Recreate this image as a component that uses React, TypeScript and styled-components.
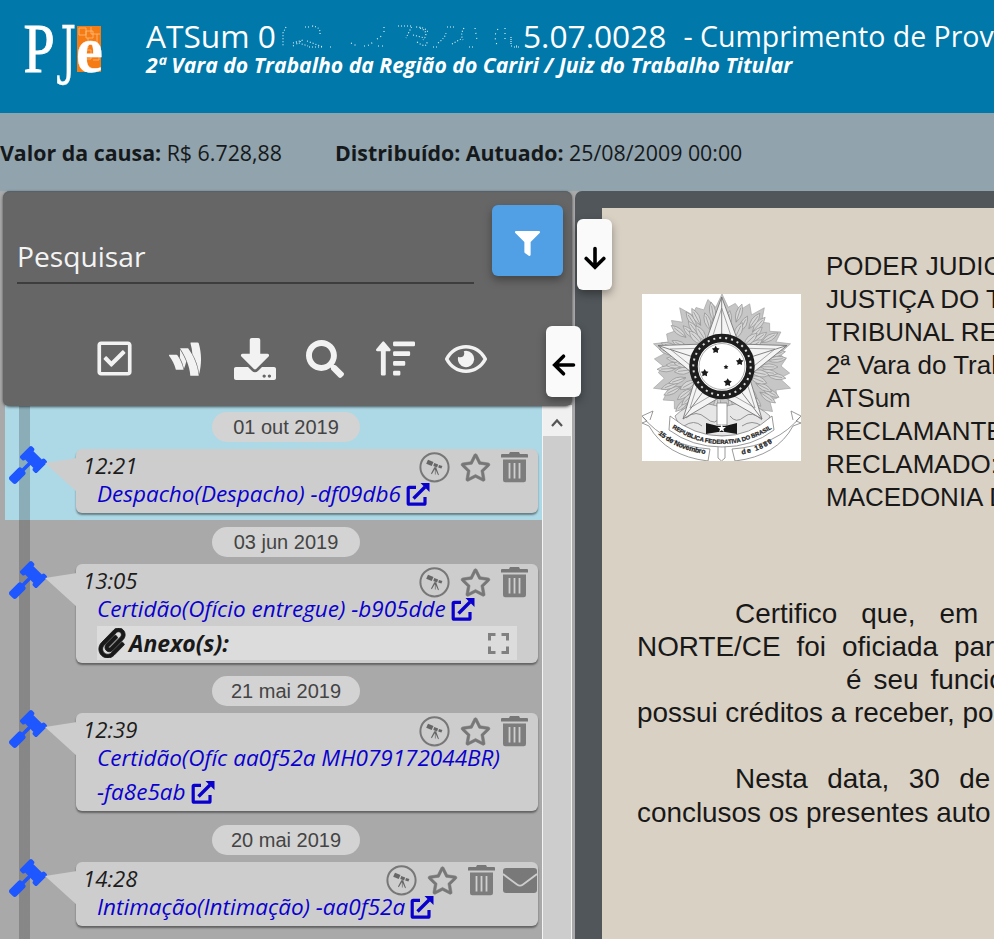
import React from "react";
import styled, { createGlobalStyle } from "styled-components";
import {
  FaDownload,
  FaFilter,
  FaGavel,
  FaGoogleWallet,
  FaPaperclip,
  FaRegCheckSquare,
  FaRegEye,
  FaRegStar,
  FaSearch,
  FaSortAmountUp,
} from "react-icons/fa";

const GlobalStyle = createGlobalStyle`
  *, *::before, *::after { box-sizing: border-box; }
  html, body { margin: 0; padding: 0; }
  body { overflow: hidden; font-family: "Open Sans", "Noto Sans", sans-serif; }
  svg { display: block; flex: none; }
`;

/* ---------- page frame ---------- */

const Page = styled.div`
  display: flex;
  flex-direction: column;
  width: 994px;
  height: 939px;
  overflow: hidden;
  background: #a9a9a9;
`;

const Header = styled.header`
  display: flex;
  flex: none;
  height: 113px;
  padding-left: 20px;
  background: #0078aa;
  color: #fff;
`;

const Brand = styled.div`
  flex: none;
  width: 126px;
  padding-top: 20px;
`;

const Titles = styled.div`
  flex: none;
  padding-top: 18px;
  white-space: nowrap;
`;

const CaseTitle = styled.div`
  display: flex;
  height: 32px;
  line-height: 35px;
  font-size: 31.7px;
`;

const CaseClass = styled.span`
  margin-left: 17px;
  font-size: 28.5px;
  line-height: 37px;
`;

const Court = styled.div`
  font-size: 21.2px;
  line-height: 29px;
  font-weight: 700;
  font-style: italic;
`;

const InfoBar = styled.div`
  display: flex;
  flex: none;
  align-items: center;
  gap: 53px;
  height: 78px;
  background: #91a3ac;
  color: #15191b;
  font-size: 21.35px;
  white-space: nowrap;
`;

const Body = styled.main`
  display: flex;
  flex: 1;
  min-height: 0;
  background: #a9a9a9;
`;

/* ---------- left column ---------- */

const Sidebar = styled.section`
  position: relative;
  z-index: 1;
  display: flex;
  flex-direction: column;
  flex: none;
  width: 572px;
`;

const ToolPanel = styled.div`
  position: relative;
  z-index: 1;
  flex: none;
  height: 215px;
  margin-left: 3px;
  border-radius: 7px;
  background: #666;
  box-shadow: 0 1px 3px rgba(0, 0, 0, 0.6), inset 0 1px 1px #56616a;
`;

const SearchRow = styled.div`
  display: flex;
  gap: 18px;
  padding: 14px 9px 0 14px;
`;

const SearchField = styled.div`
  width: 457px;
  height: 79px;
  padding-top: 33px;
  border-bottom: 2px solid #3d3d3d;
  color: #f4f4f4;
  font-size: 28.2px;
  line-height: 37px;
`;

const FilterButton = styled.button`
  display: flex;
  align-items: center;
  justify-content: center;
  width: 71px;
  height: 71px;
  padding: 5px 0 0;
  border: 0;
  border-radius: 6px;
  background: #519fe4;
  color: #fff;
  box-shadow: 0 4px 8px rgba(0, 0, 0, 0.35);
`;

const Tools = styled.div`
  display: grid;
  grid-template-columns: repeat(6, 70.4px);
  margin: 43px 0 0 76px;
  height: 63px;
`;

const Tool = styled.div<{ $w: number; $h: number }>`
  display: flex;
  align-items: center;
  justify-content: center;
  color: #f2f2f2;
  svg {
    width: ${(p) => p.$w}px;
    height: ${(p) => p.$h}px;
  }
`;

const ListArea = styled.div`
  display: flex;
  flex: 1;
  min-height: 0;
  margin-top: -1px;
  padding-left: 5px;
`;

const Timeline = styled.div`
  width: 537px;
  overflow: hidden;
`;

const Entry = styled.article<{ $height: number; $active?: boolean }>`
  height: ${(p) => p.$height}px;
  padding-top: 7px;
  background: linear-gradient(rgba(0, 0, 0, 0.2), rgba(0, 0, 0, 0.2)) 14px 0 / 11px 100% no-repeat
    ${(p) => (p.$active ? "#add8e6" : "#a9a9a9")};
`;

const DatePill = styled.div`
  width: 148px;
  height: 30px;
  margin-left: 207px;
  border-radius: 15px;
  background: #d3d3d3;
  color: #444;
  font: 20px/30px "Liberation Sans", sans-serif;
  text-align: center;
`;

const EntryRow = styled.div`
  display: flex;
  align-items: flex-start;
  margin-top: 7px;
  padding-left: 4px;
`;

const Hammer = styled.div`
  width: 67px;
  margin-top: -3.5px;
  color: #1e56ff;
`;

const Card = styled.div<{ $height: number }>`
  position: relative;
  width: 462px;
  height: ${(p) => p.$height}px;
  padding-left: 7px;
  border-radius: 6px;
  background: #cdcdcd;
  box-shadow: 0 2px 2px rgba(0, 0, 0, 0.42);
  font-style: italic;
  font-size: 22.5px;

  &::before {
    content: "";
    position: absolute;
    left: -31px;
    top: 9px;
    width: 32px;
    height: 34px;
    background: #cdcdcd;
    clip-path: polygon(0 5px, 100% 0, 100% 100%);
  }
`;

const CardHead = styled.div`
  display: flex;
  align-items: flex-start;
  justify-content: space-between;
  height: 28px;
  color: #1c1c1c;
  line-height: 34px;
  font-size: 22.2px;
`;

const Actions = styled.div<{ $right: number }>`
  display: flex;
  align-items: flex-start;
  padding: 3px ${(p) => p.$right}px 0 0;
  color: #777;
`;

const StarSlot = styled.div`
  margin: 0 10px 0 10px;
  svg {
    stroke: currentColor;
    stroke-width: 10;
  }
`;

const MailSlot = styled.div`
  margin: 3px 0 0 8px;
`;

const DocLink = styled.a`
  display: block;
  margin-left: 14px;
  color: #0a00cd;
  line-height: 34px;
  white-space: nowrap;
  svg {
    display: inline-block;
    vertical-align: -5px;
    margin-left: 5px;
  }
`;

const Attachments = styled.div`
  display: flex;
  align-items: center;
  width: 420px;
  height: 34px;
  margin-left: 14px;
  padding-right: 8px;
  background: #dcdcdc;
  color: #191919;
  font-size: 23px;
  line-height: 36px;
  font-weight: 700;
`;

const ClipSlot = styled.span`
  width: 27px;
  svg {
    stroke: currentColor;
    stroke-width: 14;
  }
`;

const AttachLabel = styled.span`
  flex: 1;
  margin-left: 5px;
`;

const Scrollbar = styled.div`
  width: 30px;
  border: solid #f4f4f4;
  border-width: 0 1px;
  background: #cdcdcd;
`;

const ScrollUp = styled.div`
  display: flex;
  align-items: center;
  justify-content: center;
  height: 31px;
  padding-top: 5px;
  background: #f0f0f0;
`;

const Tab = styled.button<{ $x: number; $y: number }>`
  position: absolute;
  z-index: 2;
  left: ${(p) => p.$x}px;
  top: ${(p) => p.$y}px;
  display: flex;
  align-items: center;
  justify-content: center;
  width: 35px;
  height: 71px;
  padding: 6px 0 0;
  border: 0;
  border-radius: 6px;
  background: #fafafa;
  box-shadow: 0 4px 8px rgba(0, 0, 0, 0.35);
`;

/* ---------- document viewer ---------- */

const Viewer = styled.section`
  flex: 1;
  min-width: 0;
  margin-left: 3px;
  padding: 17px 0 0 27px;
  border-top-left-radius: 7px;
  background: #50565a;
  overflow: hidden;
`;

const Sheet = styled.div`
  height: 100%;
  padding-top: 42px;
  background: #dad1c5;
  color: #181818;
  font-family: "Liberation Sans", sans-serif;
  white-space: pre;
`;

const Letterhead = styled.div`
  display: flex;
  padding-left: 40px;
`;

const Crest = styled.div`
  width: 159px;
  height: 167px;
  margin-top: 44px;
  background: #fff;
`;

const Heading = styled.div`
  margin-left: 25px;
  font-size: 26px;
  line-height: 33px;
`;

const Copy = styled.div`
  margin-top: 82.5px;
  padding-left: 35px;
  font-size: 27.9px;
  line-height: 33.2px;
`;

const CopyLine = styled.div<{ $indent?: number; $space?: number }>`
  height: 33.2px;
  padding-left: ${(p) => p.$indent ?? 0}px;
  word-spacing: ${(p) => p.$space ?? 0}px;
`;

/* ---------- drawings ---------- */

const Logo = () => (
  <svg width="90" height="72" viewBox="20 20 90 72">
    <rect x="77" y="26" width="24" height="46" fill="#f57c14" />
    <g fill="none" stroke="#ffc48a" strokeWidth=".7">
      <path d="M79 28h7v7h-7zM86 31h7v7h-7zM83 50h8v9h-8zM91 27v7h9M93 54h6v6h-6M88 38v10M97 34v8" />
    </g>
    <g fill="#fff" stroke="#fff">
      <text transform="translate(23.500 72) scale(.8 1)" fontFamily="Liberation Serif, serif" fontSize="70" strokeWidth="1" textLength="39" lengthAdjust="spacingAndGlyphs">P</text>
      <text transform="translate(60.500 72) scale(.62 1)" fontFamily="DejaVu Serif, serif" fontSize="63" strokeWidth=".3">J</text>
      <text transform="translate(76 71.500) scale(.92 1)" fontFamily="Liberation Serif, serif" fontWeight="700" fontSize="66" strokeWidth=".3">e</text>
    </g>
  </svg>
);

const MaskedDigits = () => (
  <svg width="247" height="33" viewBox="0 -1 247 33" aria-hidden="true">
    <g fill="none" stroke="#e9f6fb" strokeWidth="1.100">
      <path strokeDasharray="1 2" d="M10 8l-3 6v14M17 24l10-3M20 23l12 4M29 8h6M36 7q9 1 8 8M31 22l16 6M33 28h14" />
      <path strokeDasharray="1 3" d="M17 27l10-6M54 28h4M75 24l6 3M88 27q5 0 9-4M101 20l6-4M102 27h7M108 8v5" />
      <path strokeDasharray="1 2" d="M122 7h14l-6 12M140 8q9 0 12 5M137 16l12 3M144 9q10 4 3 12M141 23q10 7 10 0M157 28h5M162 24q7-5 8-10M171 8h8M176 25l9-5M188 9q-4 6-1 12M193 28h4" />
      <path strokeDasharray="1 4" d="M199 9l2 12M222 10q-5 6-1 16M229 9v13M235 27h8" />
      <path strokeDasharray="1 1" d="M235 18v8M238 28h6" />
    </g>
  </svg>
);

const Telescope = () => (
  <svg width="31" height="31" viewBox="0 0 31 31">
    <circle cx="15.500" cy="15.300" r="14.100" fill="none" stroke="#777" strokeWidth="2" />
    <g fill="#666">
      <path d="M9 7.700l5.500 2.200-1.800 4-5.500-2.200zM15.200 11l4 1.500-1.200 3-3.700-1.400zM20 13l3.400 1-1 2.600-3.200-1z" />
      <path d="M15.300 15.200h1.800l2.800 7.600-.8.400-3-6.400-3.300 5.400-.8-.6zM15.900 16.500h.7v6h-.7z" />
    </g>
  </svg>
);

const Trash = () => (
  <svg width="27" height="31" viewBox="0 0 27 31">
    <path fill="#777" d="M9 0h9l1 2h7a1 1 0 0 1 1 1v2.600H0V3a1 1 0 0 1 1-1h7z" />
    <path fill="#7d7d7d" d="M2 7.500h23V28a2.200 2.200 0 0 1-2.200 2.200H4.200A2.200 2.200 0 0 1 2 28z" />
    <path stroke="#cfcfcf" strokeWidth="1.800" d="M8.500 11v15.500M13.500 11v15.500M18.500 11v15.500" />
  </svg>
);

const Mail = () => (
  <svg width="34" height="25" viewBox="0 0 34 25">
    <rect width="34" height="25" rx="3" fill="#797979" />
    <path d="M0 6l14 10.500q3 2.200 6 0L34 6" fill="none" stroke="#cdcdcd" strokeWidth="1.800" />
  </svg>
);

const OpenIcon = () => (
  <svg width="24" height="24" viewBox="0 0 24 24">
    <path d="M10 4.300H3.200a1 1 0 0 0-1 1V20.200a1 1 0 0 0 1 1H18a1 1 0 0 0 1-1V14" fill="none" stroke="currentColor" strokeWidth="3.200" />
    <path d="M7.500 15.500L19 4" stroke="currentColor" strokeWidth="3.400" />
    <path d="M14.500 0H23.500V9z" fill="currentColor" />
  </svg>
);

const Expand = () => (
  <svg width="21" height="21" viewBox="0 0 21 21">
    <path d="M1.500 7.500v-6h6M13.500 1.500h6v6M19.500 13.500v6h-6M7.500 19.500h-6v-6" fill="none" stroke="#808080" strokeWidth="3" />
  </svg>
);

const Arrow = ({ left }: { left?: boolean }) => (
  <svg width="24" height="24" viewBox="0 0 24 24">
    <path
      transform={left ? "rotate(90 12 12)" : undefined}
      d="M12 2.500V21M3.200 12.500l8.800 8.800 8.800-8.800"
      fill="none"
      stroke="#000"
      strokeWidth="3.600"
      strokeLinejoin="miter"
      strokeLinecap="round"
    />
  </svg>
);

const starPoints = (cx: number, cy: number, r: number, inner = 0.4) =>
  Array.from({ length: 10 }, (_, i) => {
    const a = -Math.PI / 2 + (i * Math.PI) / 5;
    const d = i % 2 ? r * inner : r;
    return `${(cx + d * Math.cos(a)).toFixed(1)},${(cy + d * Math.sin(a)).toFixed(1)}`;
  }).join(" ");

const leafRing = (count: number, from: number, length: number, width: number, shift: number) =>
  Array.from({ length: count }, (_, i) => {
    const deg = (i * 360) / count + shift + (i % 3) * 4;
    return (
      <g key={`${from}-${i}`} transform={`rotate(${deg} 80 72)`}>
        <path d={`M80 ${72 - from}q${width} ${-length / 2} 0 ${-length}q${-width} ${length / 2} 0 ${length}`} />
        <path d={`M80 ${72 - from}v${-length * 0.8}`} />
      </g>
    );
  });

const Emblem = () => (
  <svg width="159" height="167" viewBox="0 0 159 167">
    <polygon
      points={Array.from({ length: 60 }, (_, i) => {
        const a = -Math.PI / 2 + (i * Math.PI) / 30;
        const tips = [72, 64, 68];
        const r = i % 2 ? 59 : tips[(i / 2) % 3];
        return `${(80 + r * Math.cos(a)).toFixed(1)},${(72 + r * Math.sin(a)).toFixed(1)}`;
      }).join(" ")}
      fill="#c6c6c6"
      stroke="#a5a5a5"
      strokeWidth=".7"
    />
    <g fill="#d6d6d6" stroke="#959595" strokeWidth=".7">
      {leafRing(26, 46, 19, 6, 0)}
      {leafRing(24, 38, 18, 6, 8)}
      {leafRing(20, 30, 18, 7, 3)}
    </g>
    <path d="M33 122q20-20 47-8 26-12 48 8l-8 20H42z" fill="#e6e6e6" stroke="#8c8c8c" strokeWidth=".8" />
    <path d="M44 124q10-9 20 0t14-2M88 122q6 8 14 1t18 3M42 132q10-7 18 0M100 132q10-7 20 0" fill="none" stroke="#929292" />
    <g stroke="#777" strokeWidth=".9" strokeLinejoin="round">
      <polygon points="79.700,3 97,50 145,51.500 107,82 120,125 80,102 41,125 54,82 16,51.500 63,50" fill="#f4f4f4" />
      <polygon points="79.700,14 93,54 133,55 102,80 113,114 80,95 48,114 59,80 28,55 67,54" fill="none" stroke="#9a9a9a" />
      <path d="M79.700 3V60M145 51.500L90 69M16 51.500L70 69M120 125L88 83M41 125L72 83" fill="none" />
    </g>
    <circle cx="80" cy="72.500" r="28.500" fill="#fff" stroke="#1d1d1d" strokeWidth="8.500" />
    <circle cx="80" cy="72.500" r="28.700" fill="none" stroke="#ddd" strokeWidth="2" strokeDasharray="2 4.010" />
    <circle cx="80" cy="72.500" r="23" fill="#fff" stroke="#777" strokeWidth=".6" />
    <g fill="#1a1a1a">
      <polygon points={starPoints(73.7, 55.7, 4, 0.55)} />
      <polygon points={starPoints(97.7, 67.7, 4, 0.55)} />
      <polygon points={starPoints(84, 73, 2.5, 0.55)} />
      <polygon points={starPoints(62.7, 79, 4, 0.55)} />
      <polygon points={starPoints(85.7, 88.5, 4.3, 0.55)} />
    </g>
    <g fill="#fff" stroke="#808080" strokeWidth=".8">
      <path d="M75 109h10v22H75zM76 150h7v14l-3.500 3-3.500-3z" />
      <path d="M28 122l-1 14q23 17 53 17t52-17l-2-14q-22 20-50 20T28 122z" />
      <path d="M0 122q24 30 68 33l-2 12Q24 162 7 132l-7-3 5-2zM159 122q-24 30-69 33l3 12q42-5 58-35l8-3-5-2z" />
      <path d="M0 122l11-5-3 9M159 122l-10-5 2 9" />
    </g>
    <path d="M64 129l12 3h7l12-3v11l-12-2h-7l-12 2z" fill="#181818" />
    <polygon points={starPoints(79.7, 134.5, 4.5)} fill="#fff" />
    <path id="crest-upper" d="M30 134Q55 150 80 150T131 134" fill="none" />
    <path id="crest-left" d="M16 140Q34 156 66 160.500" fill="none" />
    <path id="crest-right" d="M100 160.500Q122 156 134 146" fill="none" />
    <g fontFamily="Liberation Sans, sans-serif" fontWeight="700" fill="#222" stroke="#222" strokeWidth=".25">
      <text fontSize="6" textLength="106"><textPath href="#crest-upper">REPUBLICA FEDERATIVA DO BRASIL</textPath></text>
      <text fontSize="7" textLength="52"><textPath href="#crest-left">15 de Novembro</textPath></text>
      <text fontSize="7" textLength="33"><textPath href="#crest-right">de 1889</textPath></text>
    </g>
  </svg>
);

/* ---------- content ---------- */

interface TimelineEntry {
  date: string;
  time: string;
  lines: string[];
  entryHeight: number;
  cardHeight: number;
  active?: boolean;
  attachments?: boolean;
  mail?: boolean;
}

const entries: TimelineEntry[] = [
  { date: "01 out 2019", time: "12:21", lines: ["Despacho(Despacho) -df09db6"], entryHeight: 115, cardHeight: 64, active: true },
  { date: "03 jun 2019", time: "13:05", lines: ["Certidão(Ofício entregue) -b905dde"], entryHeight: 149, cardHeight: 99, attachments: true },
  { date: "21 mai 2019", time: "12:39", lines: ["Certidão(Ofíc aa0f52a MH079172044BR)", "-fa8e5ab"], entryHeight: 149, cardHeight: 98 },
  { date: "20 mai 2019", time: "14:28", lines: ["Intimação(Intimação) -aa0f52a"], entryHeight: 130, cardHeight: 64, mail: true },
];

const EntryView = ({ entry }: { entry: TimelineEntry }) => (
  <Entry $height={entry.entryHeight} $active={entry.active}>
    <DatePill>{entry.date}</DatePill>
    <EntryRow>
      <Hammer>
        <FaGavel size={38} />
      </Hammer>
      <Card $height={entry.cardHeight}>
        <CardHead>
          <span>{entry.time}</span>
          <Actions $right={entry.mail ? 1 : 10}>
            <Telescope />
            <StarSlot>
              <FaRegStar size={31} />
            </StarSlot>
            <Trash />
            {entry.mail && (
              <MailSlot>
                <Mail />
              </MailSlot>
            )}
          </Actions>
        </CardHead>
        <DocLink>
          {entry.lines.map((line, i) => (
            <React.Fragment key={line}>
              {i > 0 && <br />}
              {line}
            </React.Fragment>
          ))}
          <OpenIcon />
        </DocLink>
        {entry.attachments && (
          <Attachments>
            <ClipSlot>
              <FaPaperclip size={30} width={27} />
            </ClipSlot>
            <AttachLabel>Anexo(s):</AttachLabel>
            <Expand />
          </Attachments>
        )}
      </Card>
    </EntryRow>
  </Entry>
);

const headingLines = [
  "PODER JUDICIÁRIO",
  "JUSTIÇA DO TRABALHO",
  "TRIBUNAL REGIONAL",
  "2ª Vara do Trabalho",
  "ATSum",
  "RECLAMANTE:",
  "RECLAMADO:",
  "MACEDONIA D",
];

export default function App() {
  return (
    <>
      <GlobalStyle />
      <Page>
        <Header>
          <Brand>
            <Logo />
          </Brand>
          <Titles>
            <CaseTitle>
              <span>ATSum 0</span>
              <MaskedDigits />
              <span>5.07.0028</span>
              <CaseClass>- Cumprimento de Prov</CaseClass>
            </CaseTitle>
            <Court>2ª Vara do Trabalho da Região do Cariri / Juiz do Trabalho Titular</Court>
          </Titles>
        </Header>
        <InfoBar>
          <span>
            <b>Valor da causa:</b> R$ 6.728,88
          </span>
          <span>
            <b>Distribuído: Autuado:</b> 25/08/2009 00:00
          </span>
        </InfoBar>
        <Body>
          <Sidebar>
            <ToolPanel>
              <SearchRow>
                <SearchField>Pesquisar</SearchField>
                <FilterButton>
                  <FaFilter size={25} />
                </FilterButton>
              </SearchRow>
              <Tools>
                <Tool $w={39} $h={39}><FaRegCheckSquare /></Tool>
                <Tool $w={38} $h={38}><FaGoogleWallet /></Tool>
                <Tool $w={42} $h={42}><FaDownload /></Tool>
                <Tool $w={38} $h={38}><FaSearch /></Tool>
                <Tool $w={39} $h={39}><FaSortAmountUp /></Tool>
                <Tool $w={42} $h={42}><FaRegEye /></Tool>
              </Tools>
            </ToolPanel>
            <ListArea>
              <Timeline>
                {entries.map((entry) => (
                  <EntryView key={entry.date} entry={entry} />
                ))}
              </Timeline>
              <Scrollbar>
                <ScrollUp>
                  <svg width="12" height="10" viewBox="0 0 12 10">
                    <path d="M1 8l5-5.500L11 8" fill="none" stroke="#555" strokeWidth="2.200" />
                  </svg>
                </ScrollUp>
              </Scrollbar>
            </ListArea>
            <Tab $x={577} $y={28}>
              <Arrow />
            </Tab>
            <Tab $x={546} $y={135}>
              <Arrow left />
            </Tab>
          </Sidebar>
          <Viewer>
            <Sheet>
              <Letterhead>
                <Crest>
                  <Emblem />
                </Crest>
                <Heading>
                  {headingLines.map((line) => (
                    <div key={line}>{line}</div>
                  ))}
                </Heading>
              </Letterhead>
              <Copy>
                <CopyLine $indent={98} $space={16.2}>Certifico que, em</CopyLine>
                <CopyLine $space={8.2}>NORTE/CE foi oficiada par</CopyLine>
                <CopyLine $indent={209} $space={4.2}>é seu funcio</CopyLine>
                <CopyLine>possui créditos a receber, po</CopyLine>
                <CopyLine />
                <CopyLine $indent={98} $space={11.7}>Nesta data, 30 de</CopyLine>
                <CopyLine>conclusos os presentes auto</CopyLine>
              </Copy>
            </Sheet>
          </Viewer>
        </Body>
      </Page>
    </>
  );
}
